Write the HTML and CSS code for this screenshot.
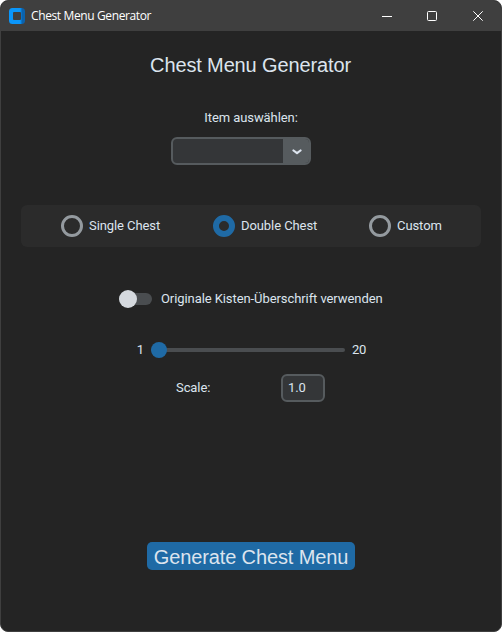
FILE: index.html
```html
<!DOCTYPE html>
<html lang="de">
<head>
<meta charset="utf-8">
<title>Chest Menu Generator</title>
<link rel="stylesheet" href="styles.css">
</head>
<body>
<div class="window">
  <header class="titlebar">
    <svg class="logo" width="16" height="16" viewBox="0 0 16 16">
      <defs><linearGradient id="g"><stop offset=".7" stop-color="#0a96fa"/><stop offset=".82" stop-color="#0b62ac"/></linearGradient></defs>
      <path fill="url(#g)" fill-rule="evenodd" d="M3.500 0h9Q16 0 16 3.500v9Q16 16 12.500 16h-9Q0 16 0 12.500v-9Q0 0 3.500 0ZM5 4Q4 4 4 5v6q0 1 1 1h6q1 0 1-1V5q0-1-1-1Z"/>
    </svg>
    <span class="caption">Chest Menu Generator</span>
    <svg class="controls" width="102" height="12" viewBox="0 0 102 12" fill="none" stroke="#fff">
      <path d="M0 6.500h10"/>
      <rect x="45.500" y="1.500" width="9" height="9" rx="1"/>
      <path d="M91.300 1.300l9.400 9.400M100.700 1.300l-9.400 9.400"/>
    </svg>
  </header>
  <main class="content">
    <h1 class="title">Chest Menu Generator</h1>
    <div class="label">Item auswählen:</div>
    <div class="combo">
      <div class="combo-button">
        <svg width="10" height="6" viewBox="0 0 10 6" fill="none" stroke="#dce4ee" stroke-width="2.200" stroke-linecap="round" stroke-linejoin="round"><path d="M1.500 1.500L5 4.200l3.500-2.700"/></svg>
      </div>
    </div>
    <div class="radios">
      <div class="radio"><i class="dot"></i><span>Single Chest</span></div>
      <div class="radio"><i class="dot checked"></i><span>Double Chest</span></div>
      <div class="radio"><i class="dot"></i><span>Custom</span></div>
    </div>
    <div class="switch-row">
      <div class="switch"><i class="knob"></i></div>
      <span class="switch-text">Originale Kisten-Überschrift verwenden</span>
    </div>
    <div class="slider-row">
      <span>1</span>
      <div class="slider"><i class="handle"></i></div>
      <span>20</span>
    </div>
    <div class="scale-row">
      <span class="scale-label">Scale:</span>
      <div class="entry">1.0</div>
    </div>
    <div class="generate">Generate Chest Menu</div>
  </main>
</div>
</body>
</html>
```
FILE: styles.css
```css
* { box-sizing: border-box; }
body { margin: 0; background: #fff; }
.window {
  width: 502px; height: 632px; overflow: hidden;
  border: 1px solid #3f3f3f; border-radius: 8px;
  background: #242424; color: #dce4ee;
  font: 13px/20px Roboto, sans-serif; letter-spacing: -.08px;
}
.titlebar {
  display: flex; align-items: center; height: 30px;
  padding-left: 8px; background: #3f3f3f; color: #fff;
}
.caption {
  margin-left: 6px; flex: 1; white-space: nowrap;
  font: 12px/20px "Open Sans", sans-serif; letter-spacing: -.38px;
}
.controls { margin-right: 17px; }
.content { display: flex; flex-direction: column; align-items: center; }
.title {
  margin: 20px 1px 0 0; font: 20px/28px "Liberation Sans", sans-serif;
  letter-spacing: -.13px;
}
.label { margin-top: 29px; }
.combo {
  display: flex; justify-content: flex-end;
  width: 140px; height: 28px; margin: 9px 20px 0 0; overflow: hidden;
  border: 2px solid #565b5e; border-radius: 6px; background: #343638;
}
.combo-button {
  display: flex; align-items: center; justify-content: center;
  width: 26px; padding-left: 2px; padding-top: 1px; background: #565b5e;
}
.radios {
  display: grid; grid-template-columns: 152px 156px auto;
  width: 460px; height: 42px; margin-top: 40px; padding-left: 40px;
  align-items: center; border-radius: 6px; background: #2b2b2b;
}
.radio { display: flex; align-items: center; gap: 6px; }
.dot { width: 22px; height: 22px; border: 3px solid #949a9f; border-radius: 50%; }
.dot.checked { border: 6px solid #1f6aa5; }
.switch-row { display: flex; align-items: center; width: 264px; height: 24px; margin-top: 40px; }
.switch { display: flex; align-items: center; width: 33px; height: 12px; border-radius: 6px; background: #4a4d50; }
.knob { width: 18px; height: 18px; flex: none; border-radius: 50%; background: #d5d9de; }
.switch-text { margin-left: 9px; white-space: nowrap; }
.slider-row { display: flex; align-items: center; height: 20px; margin: 29px 0 0 1px; gap: 7px; }
.slider { display: flex; align-items: center; width: 194px; height: 4px; border-radius: 2px; background: #4a4d50; }
.handle { width: 16px; height: 16px; flex: none; border-radius: 50%; background: #1f6aa5; }
.scale-row { display: flex; align-items: center; justify-content: space-between; width: 149px; height: 28px; margin: 14px 1px 0 0; }
.entry { width: 44px; height: 28px; padding: 2px 5px; border: 2px solid #565b5e; border-radius: 6px; background: #343638; }
.generate {
  width: 208px; height: 28px; margin-top: 140px; border-radius: 5px;
  background: #1f6aa5; text-align: center; white-space: nowrap;
  font: 20px/30px "Liberation Sans", sans-serif; letter-spacing: -.13px;
}
```
